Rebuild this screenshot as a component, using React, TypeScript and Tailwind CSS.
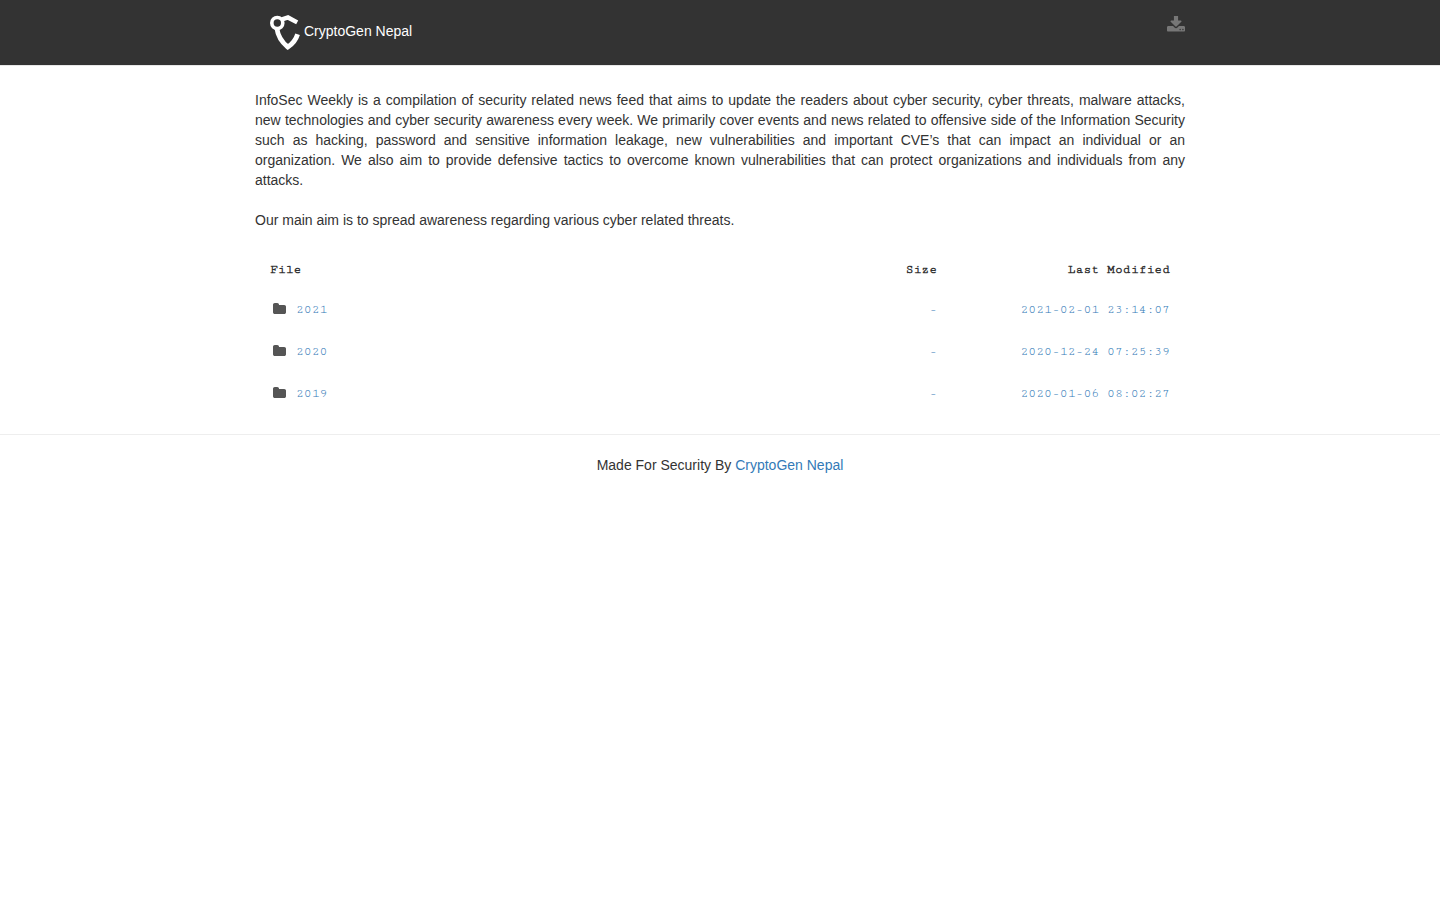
const entries = [
  { name: "2021", size: "-", modified: "2021-02-01 23:14:07" },
  { name: "2020", size: "-", modified: "2020-12-24 07:25:39" },
  { name: "2019", size: "-", modified: "2020-01-06 08:02:27" },
];

function Logo() {
  return (
    <svg width="30" height="35" viewBox="0 0 30 35" fill="none" stroke="#fff" aria-hidden="true">
      <circle cx="7.3" cy="8" r="5.5" strokeWidth="3.6" />
      <path d="M12 4.4 L18 2.5 L27.2 7.4" strokeWidth="4.4" />
      <path d="M6.8 13 C7.8 20.5 11.5 27 17.8 32 C22.3 29 25.8 25 27.6 19.2" strokeWidth="4.8" />
    </svg>
  );
}

function DownloadIcon() {
  return (
    <svg width="18" height="16" viewBox="64 128 1664 1408" fill="currentColor" aria-hidden="true">
      <path d="M1344 1344q0-26-19-45t-45-19-45 19-19 45 19 45 45 19 45-19 19-45zm256 0q0-26-19-45t-45-19-45 19-19 45 19 45 45 19 45-19 19-45zm128-224v320q0 40-28 68t-68 28h-1472q-40 0-68-28t-28-68v-320q0-40 28-68t68-28h465l135 136q58 56 136 56t136-56l136-136h464q40 0 68 28t28 68zm-325-569q17 41-14 70l-448 448q-18 19-45 19t-45-19l-448-448q-31-29-14-70 17-39 59-39h256v-448q0-26 19-45t45-19h256q26 0 45 19t19 45v448h256q42 0 59 39z" />
    </svg>
  );
}

function FolderIcon() {
  return (
    <svg className="mb-1" width="13" height="11" viewBox="0 128 1664 1408" fill="#555" aria-hidden="true">
      <path d="M1664 608v704q0 92-66 158t-158 66h-1216q-92 0-158-66t-66-158v-960q0-92 66-158t158-66h320q92 0 158 66t66 158v32h672q92 0 158 66t66 158z" />
    </svg>
  );
}

export default function App() {
  return (
    <div className="bg-white font-['Liberation_Sans',Arial,sans-serif] text-sm leading-5 text-[#333]">
      <header className="border-b border-[#e7e7e7] bg-[#333]">
        <nav className="mx-auto flex h-[65px] max-w-[960px] items-start justify-between px-[15px]">
          <a href="#home" className="flex gap-1 px-[15px] pt-[15px] text-white">
            <Logo />
            <span className="pt-[6px]">CryptoGen Nepal</span>
          </a>
          <a href="#download" aria-label="Download" className="pt-4 text-[#777]">
            <DownloadIcon />
          </a>
        </nav>
      </header>
      <main className="mx-auto max-w-[960px] px-[15px] pt-6">
        <p className="text-justify">
          InfoSec Weekly is a compilation of security related news feed that aims to update the readers about cyber
          security, cyber threats, malware attacks, new technologies and cyber security awareness every week. We
          primarily cover events and news related to offensive side of the Information Security such as hacking,
          password and sensitive information leakage, new vulnerabilities and important CVE’s that can impact an
          individual or an organization. We also aim to provide defensive tactics to overcome known vulnerabilities
          that can protect organizations and individuals from any attacks.
        </p>
        <p className="mt-5">Our main aim is to spread awareness regarding various cyber related threats.</p>
        <div className="mt-5 px-[15px] pb-[19px]">
          <table className="w-full table-fixed border-collapse font-['Cutive_Mono','Liberation_Mono',monospace] text-[13px] [font-variant-ligatures:none]">
            <thead>
              <tr className="h-[39px] text-right">
                <th className="text-left font-bold">File</th>
                <th className="w-[180px] font-bold">Size</th>
                <th className="w-[233px] font-bold">Last Modified</th>
              </tr>
            </thead>
            <tbody>
              {entries.map((entry) => (
                <tr key={entry.name} className="h-[42px] text-right text-[#337ab7]">
                  <td className="text-left">
                    <a href={`#${entry.name}`} className="flex items-center gap-[10px] pl-[3px]">
                      <FolderIcon />
                      {entry.name}
                    </a>
                  </td>
                  <td>{entry.size}</td>
                  <td>{entry.modified}</td>
                </tr>
              ))}
            </tbody>
          </table>
        </div>
      </main>
      <footer className="border-t border-[#eee] pt-5 text-center">
        Made For Security By{" "}
        <a href="#cryptogen" className="text-[#337ab7]">
          CryptoGen Nepal
        </a>
      </footer>
    </div>
  );
}
